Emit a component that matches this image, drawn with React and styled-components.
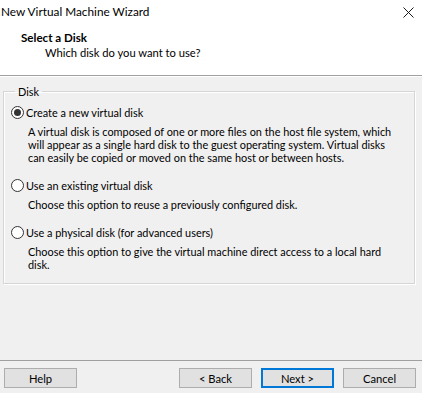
import React, { useState } from "react";
import styled, { createGlobalStyle } from "styled-components";

const options = [
  {
    id: "new",
    label: "Create a new virtual disk",
    text: [
      "A virtual disk is composed of one or more files on the host file system, which",
      "will appear as a single hard disk to the guest operating system. Virtual disks",
      "can easily be copied or moved on the same host or between hosts.",
    ],
  },
  {
    id: "existing",
    label: "Use an existing virtual disk",
    text: ["Choose this option to reuse a previously configured disk."],
  },
  {
    id: "physical",
    label: "Use a physical disk (for advanced users)",
    text: [
      "Choose this option to give the virtual machine direct access to a local hard",
      "disk.",
    ],
  },
];

const Wizard = () => {
  const [choice, setChoice] = useState("new");

  return (
    <Window>
      <TitleBar>
        <Title>New Virtual Machine Wizard</Title>
        <Close aria-label="Close">
          <svg width="11" height="11" viewBox="0 0 11 11">
            <path d="M0.5 0.5 L10.5 10.5 M10.5 0.5 L0.5 10.5" stroke="#1a1a1a" strokeWidth="1" />
          </svg>
        </Close>
      </TitleBar>
      <Header>
        <Heading>Select a Disk</Heading>
        <SubHeading>Which disk do you want to use?</SubHeading>
      </Header>
      <Body>
        <Group>
          <Legend>Disk</Legend>
          {options.map((o) => (
            <Option key={o.id}>
              <RadioRow onClick={() => setChoice(o.id)}>
                <Radio $checked={choice === o.id} />
                <span>{o.label}</span>
              </RadioRow>
              <Description>
                {o.text.map((line) => (
                  <div key={line}>{line}</div>
                ))}
              </Description>
            </Option>
          ))}
        </Group>
      </Body>
      <Footer>
        <Button>Help</Button>
        <Spacer />
        <Button>&lt; Back</Button>
        <Button $primary>Next &gt;</Button>
        <Button>Cancel</Button>
      </Footer>
    </Window>
  );
};

export default function App() {
  return (
    <>
      <GlobalStyle />
      <Wizard />
    </>
  );
}

// Styling

const GlobalStyle = createGlobalStyle`
  html, body {
    margin: 0;
    padding: 0;
    background: #f0f0f0;
  }
  body {
    font-family: Lato, "Noto Sans", sans-serif;
    font-size: 10.9px;
    color: #000;
  }
`;

const Window = styled.div`
  width: 422px;
  height: 393px;
  display: flex;
  flex-direction: column;
  background: #f0f0f0;
  overflow: hidden;
`;

const TitleBar = styled.div`
  height: 23px;
  display: flex;
  align-items: center;
  justify-content: space-between;
  background: #fff;
  padding: 0 8px 0 1px;
`;

const Title = styled.div`
  font-size: 11.8px;
`;

const Close = styled.div`
  display: flex;
  align-items: center;
  padding-top: 1px;
`;

const Header = styled.div`
  height: 53px;
  background: #fff;
  border-bottom: 1px solid #a0a0a0;
  padding: 8px 0 0 21px;
  box-sizing: border-box;
`;

const Heading = styled.div`
  font-weight: bold;
  font-size: 11.6px;
  line-height: 14px;
`;

const SubHeading = styled.div`
  padding-left: 24px;
  font-size: 11.2px;
  line-height: 16px;
`;

const Body = styled.div`
  flex: 1;
  padding: 8px 7px 0 3px;
  border-top: 1px solid #fff;
`;

const Group = styled.fieldset`
  margin: 0;
  padding: 6px 0 12px 7px;
  border: 1px solid #d5d5d5;
  box-shadow: inset 1px 1px 0 #fff, 1px 1px 0 #fff;
  display: flex;
  flex-direction: column;
  gap: 13px;
`;

const Legend = styled.legend`
  padding: 0 3px;
  margin-left: 4px;
  line-height: 13px;
`;

const Option = styled.div`
  display: flex;
  flex-direction: column;
`;

const RadioRow = styled.label`
  display: flex;
  align-items: center;
  gap: 2px;
  height: 16px;
  cursor: default;
`;

const Radio = styled.span`
  width: 11px;
  height: 11px;
  border: 1px solid #333;
  border-radius: 50%;
  background: #fff;
  display: flex;
  align-items: center;
  justify-content: center;
  &::after {
    content: "";
    width: 7px;
    height: 7px;
    border-radius: 50%;
    background: ${(p) => (p.$checked ? "#333" : "transparent")};
  }
`;

const Description = styled.div`
  margin-top: 5px;
  padding-left: 17px;
  line-height: 13px;
  white-space: nowrap;
`;

const Footer = styled.div`
  height: 33px;
  border-top: 1px solid #a0a0a0;
  display: flex;
  align-items: flex-start;
  gap: 9px;
  padding: 7px 6px 0 4px;
  box-sizing: border-box;
`;

const Spacer = styled.div`
  flex: 1;
`;

const Button = styled.button`
  width: 73px;
  height: 20px;
  padding: 0;
  font: inherit;
  font-size: 11.2px;
  background: #e1e1e1;
  border: ${(p) => (p.$primary ? "2px solid #0078d7" : "1px solid #adadad")};
  color: #000;
`;
